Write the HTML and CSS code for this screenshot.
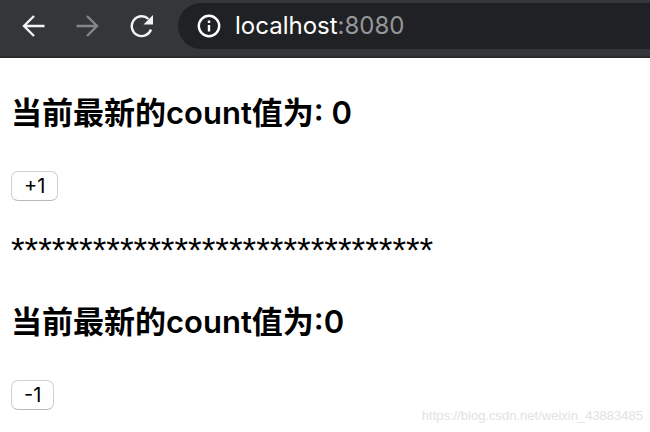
FILE: index.html
```html
<!DOCTYPE html>
<html lang="zh-CN">
<head>
  <meta charset="UTF-8">
  <title>localhost:8080</title>
  <link rel="stylesheet" href="styles.css">
</head>
<body>
  <header class="toolbar">
    <button class="nav" aria-label="Back">
      <svg viewBox="0 0 24 24"><path d="M22.500 12H2M12 2L2 12l10 10"/></svg>
    </button>
    <button class="nav" aria-label="Forward" disabled>
      <svg viewBox="0 0 24 24"><path d="M.5 12H21M11 2l10 10-10 10"/></svg>
    </button>
    <button class="nav" aria-label="Reload">
      <svg viewBox="0 0 24 24"><path d="M21 15.500A9.900 9.900 0 1 1 18.500 5"/><path class="fill" d="M23 1v9.500H13.500z"/></svg>
    </button>
    <div class="address">
      <svg class="info" viewBox="0 0 24 24"><circle cx="12" cy="12" r="10.200"/><path d="M12 11v6.500M12 6.500V9"/></svg>
      <div class="url" role="textbox" aria-label="Address" contenteditable="true" spellcheck="false">localhost<span class="port">:8080</span></div>
    </div>
  </header>

  <main>
    <h3>当前最新的count值为: <span id="count-add">0</span></h3>
    <button class="btn" onclick="update(1)">+1</button>
    <p class="stars">*******************************</p>
    <h3>当前最新的count值为:<span id="count-sub">0</span></h3>
    <button class="btn" onclick="update(-1)">-1</button>
  </main>

  <div class="watermark">https://blog.csdn.net/weixin_43883485</div>

  <script>
    let count = 0;

    function update(step) {
      count += step;
      document.getElementById("count-add").textContent = count;
      document.getElementById("count-sub").textContent = count;
    }
  </script>
</body>
</html>
```
FILE: styles.css
```css
body {
  margin: 0;
  background: #fff;
  color: #000;
  font-family: Inter, "Noto Sans CJK SC", sans-serif;
}
.toolbar {
  display: flex;
  align-items: center;
  box-sizing: border-box;
  height: 58px;
  padding: 0 0 4px 20px;
  background: #35363a;
  border-bottom: 2px solid #2b2a2e;
}
.nav {
  width: 28px;
  height: 28px;
  padding: 2px;
  margin-right: 26px;
  border: none;
  background: none;
  color: #f1f3f4;
}
.nav:disabled {
  color: #85868a;
}
.nav svg,
.info {
  display: block;
  width: 24px;
  height: 24px;
  fill: none;
  stroke: currentColor;
  stroke-width: 2.4;
}
.nav .fill {
  fill: currentColor;
  stroke: none;
}
.address {
  display: flex;
  flex: 1;
  align-items: center;
  gap: 14px;
  height: 46px;
  margin-left: -4px;
  padding-left: 19px;
  border-radius: 23px 0 0 23px;
  background: #202124;
  color: #fff;
}
.url {
  font-size: 24px;
  line-height: 30px;
  outline: none;
}
.port {
  color: #96979b;
}
main {
  padding: 0 11px;
}
h3 {
  margin: 32px 0 35px;
  font-size: 31px;
  font-weight: 600;
  line-height: 46px;
}
.btn {
  display: block;
  height: 30px;
  padding: 0 12px;
  border: 1px solid #d0d0d0;
  border-bottom-color: #b8b8b8;
  border-radius: 7px;
  background: #fff;
  color: #000;
  font-family: inherit;
  font-size: 20px;
  line-height: 28px;
}
.stars {
  margin: 32px 0;
  font-family: "Liberation Sans", sans-serif;
  font-size: 35px;
  line-height: 34px;
}
.watermark {
  position: absolute;
  right: 7px;
  bottom: 6px;
  color: #e2e2e2;
  font-family: "Liberation Sans", sans-serif;
  font-size: 13px;
  line-height: 20px;
}
```
